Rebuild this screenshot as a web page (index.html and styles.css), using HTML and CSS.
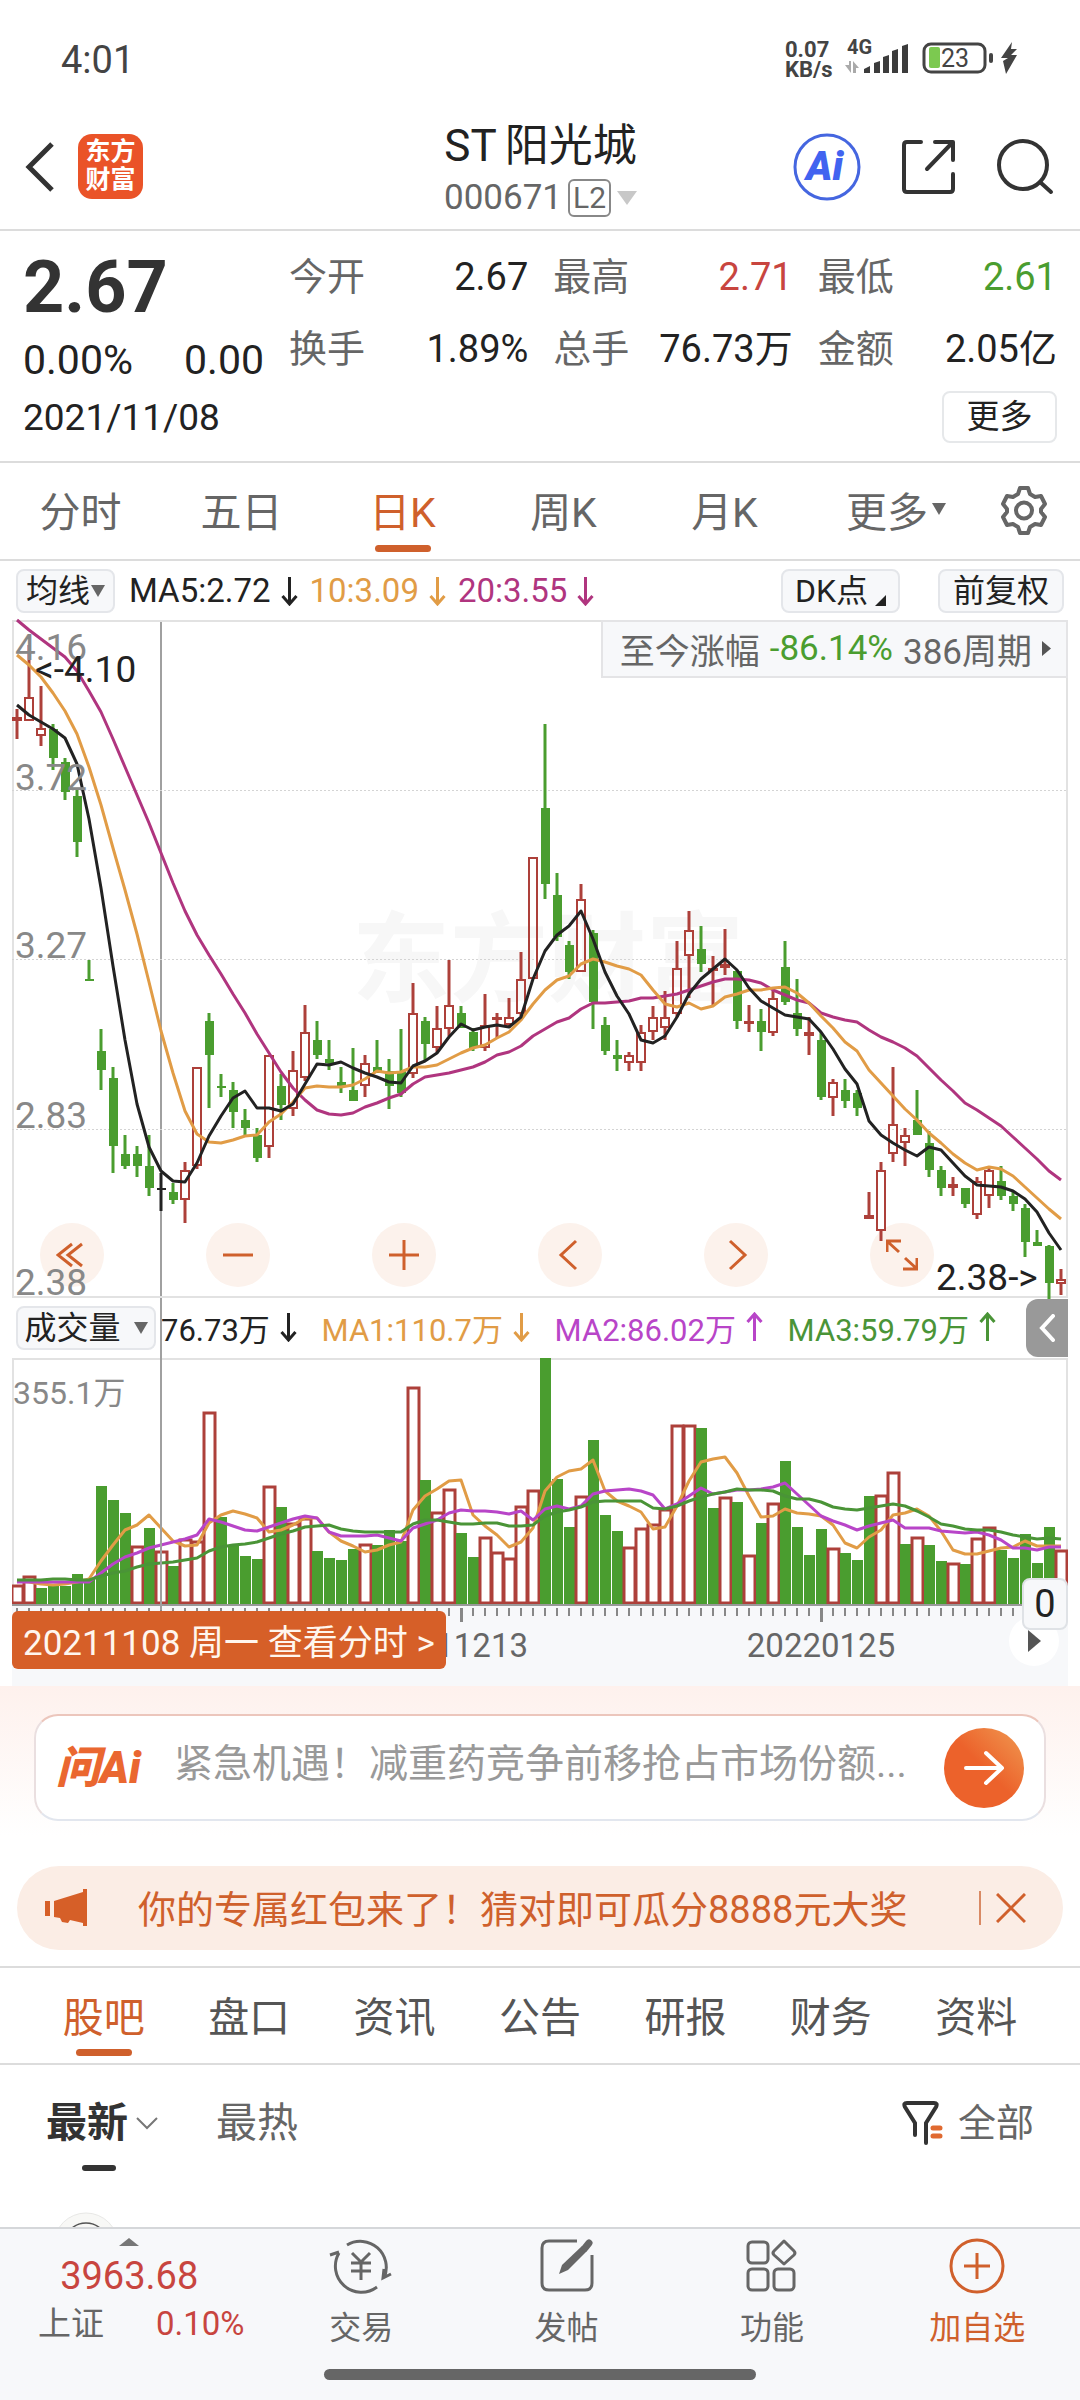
FILE: index.html
```html
<!DOCTYPE html>
<html lang="zh-CN">
<head>
<meta charset="utf-8">
<meta name="viewport" content="width=device-width">
<title>ST阳光城 000671</title>
<link rel="stylesheet" href="styles.css">
</head>
<body>
<div class="page">
  <div class="status">
    <span class="status-time">4:01</span>
    <span class="status-speed">0.07<br>KB/s</span>
    <svg class="status-icons" width="176" height="60" viewBox="0 0 176 60" aria-hidden="true">
      <text x="4" y="25" font-size="20" font-weight="700" fill="#444">4G</text>
      <path d="M2 36h4v-4h2v12zM10 44V32l6 7h-3v5z" fill="#aaa"/>
      <g fill="#3c3c3c"><path d="M21 40l6-3v7h-6zM31 34l6-2v12h-6zM40 28l6-2v18h-6zM49 22l6-2v24h-6zM59 17l6-2v29h-6z"/></g>
      <rect x="81" y="15" width="61" height="28" rx="7" fill="#fff" stroke="#444" stroke-width="3"/>
      <rect x="86" y="18" width="11" height="21" rx="2" fill="#7cc950"/>
      <text x="98" y="38" font-size="25" fill="#444">23</text>
      <rect x="146" y="24" width="4" height="10" rx="2" fill="#444"/>
      <path d="M169 13l-11 16h7l-5 3 3 13 11-19h-6l6-6h-6z" fill="#444"/>
    </svg>
  </div>

  <header class="header">
    <button class="icon-btn back" aria-label="返回"><svg width="32" height="54" viewBox="0 0 32 54"><path d="M28 4L5 27l23 23" fill="none" stroke="#333" stroke-width="5"/></svg></button>
    <div class="logo">东方<br>财富</div>
    <div class="title">
      <h1><span>ST</span>阳光城</h1>
      <div class="code"><span>000671</span><span class="level">L2</span><svg width="20" height="14" viewBox="0 0 20 14"><path d="M0 0h20L10 14z" fill="#c8c8c8"/></svg></div>
    </div>
    <div class="header-actions">
      <button class="icon-btn" aria-label="Ai"><svg width="70" height="70" viewBox="0 0 70 70"><circle cx="35" cy="35" r="32" fill="none" stroke="#4566e0" stroke-width="3"/><text x="14" y="48" font-size="40" font-weight="900" font-style="italic" fill="#4163f0">Ai</text></svg></button>
      <button class="icon-btn" aria-label="分享"><svg width="56" height="56" viewBox="0 0 56 56" fill="none" stroke="#333" stroke-width="4" stroke-linecap="round" stroke-linejoin="round"><path d="M20 3H6q-3 0-3 3v44q0 3 3 3h43q3 0 3-3V35"/><path d="M34 3h18v18M51 4L26 30"/></svg></button>
      <button class="icon-btn" aria-label="搜索"><svg width="58" height="58" viewBox="0 0 58 58" fill="none" stroke="#333" stroke-width="4" stroke-linecap="round"><circle cx="27" cy="27" r="24"/><path d="M44 44l11 10"/></svg></button>
    </div>
  </header>

  <section class="quote">
    <div class="quote-main">
      <div class="price">2.67</div>
      <div class="change"><span>0.00%</span><span>0.00</span></div>
    </div>
    <dl class="quote-grid">
      <div><dt>今开</dt><dd>2.67</dd></div>
      <div><dt>最高</dt><dd class="up">2.71</dd></div>
      <div><dt>最低</dt><dd class="down">2.61</dd></div>
      <div><dt>换手</dt><dd>1.89%</dd></div>
      <div><dt>总手</dt><dd>76.73万</dd></div>
      <div><dt>金额</dt><dd>2.05亿</dd></div>
    </dl>
    <div class="quote-foot"><span>2021/11/08</span><button class="more-btn">更多</button></div>
  </section>

  <nav class="periods">
    <button>分时</button>
    <button>五日</button>
    <button class="active">日K</button>
    <button>周K</button>
    <button>月K</button>
    <button>更多<svg width="14" height="12" viewBox="0 0 14 12"><path d="M0 0h14L7 12z" fill="#666"/></svg></button>
    <button class="gear" aria-label="设置"><svg width="50" height="50" viewBox="0 0 50 50" fill="none" stroke="#666" stroke-width="4" stroke-linejoin="round"><path d="M21 3h8l2 6 5 3 6-1 4 8-4 5v3l4 5-4 8-6-1-5 3-2 6h-8l-2-6-5-3-6 1-4-8 4-5v-3l-4-5 4-8 6 1 5-3z"/><circle cx="25" cy="25.500" r="8"/></svg></button>
  </nav>

  <div class="ma-row">
    <label class="chip select"><select aria-label="均线"><option>均线</option></select><svg width="14" height="12" viewBox="0 0 14 12"><path d="M0 0h14L7 12z" fill="#666"/></svg></label>
    <div class="ma-values">
      <span class="c-dark">MA5:2.72<svg class="arrow" viewBox="0 0 16 30"><path d="M8 1v27M1 20l7 8 7-8"/></svg></span>
      <span class="c-orange">10:3.09<svg class="arrow" viewBox="0 0 16 30"><path d="M8 1v27M1 20l7 8 7-8"/></svg></span>
      <span class="c-magenta">20:3.55<svg class="arrow" viewBox="0 0 16 30"><path d="M8 1v27M1 20l7 8 7-8"/></svg></span>
    </div>
    <button class="chip dk">DK点<svg width="11" height="11" viewBox="0 0 11 11"><path d="M11 0v11H0z" fill="#222"/></svg></button>
    <button class="chip fq">前复权</button>
  </div>

  <section class="chart">
    <div class="plot">
      <svg id="kline" viewBox="0 0 1056 678" role="img" aria-label="日K线"></svg>
      <button class="gain">至今涨幅 <span class="down">-86.14%</span> 386周期<svg width="9" height="15" viewBox="0 0 9 15"><path d="M0 0l9 7.500L0 15z" fill="#555"/></svg></button>
      <div class="tools">
        <button aria-label="快退"><svg viewBox="0 0 32 32"><path d="M16 5L2 16l14 11M26 5L12 16l14 11"/></svg></button>
        <button aria-label="缩小"><svg viewBox="0 0 32 32"><path d="M1 16h30"/></svg></button>
        <button aria-label="放大"><svg viewBox="0 0 32 32"><path d="M1 16h30M16 1v30"/></svg></button>
        <button aria-label="左移"><svg viewBox="0 0 32 32"><path d="M22 2L7 16l15 14"/></svg></button>
        <button aria-label="右移"><svg viewBox="0 0 32 32"><path d="M10 2l15 14-15 14"/></svg></button>
        <button aria-label="全屏"><svg viewBox="0 0 32 32"><path d="M1 13V2h14M2 3l11 10M31 19v11H17M30 29L19 19"/></svg></button>
      </div>
    </div>
    <div class="vol-row">
      <label class="chip select vol"><select aria-label="成交量"><option>成交量</option></select><svg width="14" height="12" viewBox="0 0 14 12"><path d="M0 0h14L7 12z" fill="#666"/></svg></label>
      <div class="vol-values">
        <span class="c-dark">76.73万<svg class="arrow" viewBox="0 0 16 30"><path d="M8 1v27M1 20l7 8 7-8"/></svg></span>
        <span class="c-orange">MA1:110.7万<svg class="arrow" viewBox="0 0 16 30"><path d="M8 1v27M1 20l7 8 7-8"/></svg></span>
        <span class="c-purple">MA2:86.02万<svg class="arrow" viewBox="0 0 16 30"><path d="M8 29V2M1 10l7-8 7 8"/></svg></span>
        <span class="c-green">MA3:59.79万<svg class="arrow" viewBox="0 0 16 30"><path d="M8 29V2M1 10l7-8 7 8"/></svg></span>
      </div>
      <button class="collapse" aria-label="收起"><svg width="16" height="28" viewBox="0 0 16 28"><path d="M14 2L3 14l11 12" fill="none" stroke="#fff" stroke-width="4" stroke-linecap="round"/></svg></button>
    </div>
    <div class="volume">
      <svg id="volume" viewBox="0 0 1056 328" role="img" aria-label="成交量"></svg>
      <button class="date-tip">20211108 周一 查看分时 &gt;</button>
      <button class="play" aria-label="播放"><svg width="13" height="22" viewBox="0 0 13 22"><path d="M0 0l13 11L0 22z" fill="#555"/></svg></button>
      <span class="zero">0</span>
    </div>
    <div class="crosshair"></div>
  </section>

  <section class="promo">
    <a class="ask" href="#ask">
      <span class="ask-logo">问Ai</span>
      <span class="ask-text">紧急机遇！减重药竞争前移抢占市场份额...</span>
      <svg width="80" height="80" viewBox="0 0 80 80"><defs><linearGradient id="go" x1="0" y1="1" x2="1" y2="0"><stop offset="0.500" stop-color="#ec622b"/><stop offset="1" stop-color="#f09a52"/></linearGradient></defs><circle cx="40" cy="40" r="40" fill="url(#go)"/><path d="M22 40h36M42 25l16 15-16 15" fill="none" stroke="#fff" stroke-width="4" stroke-linecap="round" stroke-linejoin="round"/></svg>
    </a>
    <div class="banner">
      <svg width="44" height="38" viewBox="0 0 44 38" fill="#d65f28"><path d="M0 12h5v15H0zM9 12L38 3V0h4v37h-4v-3l-13-3-2 3-6-1-2-4-6-1z"/></svg>
      <a href="#bonus">你的专属红包来了！猜对即可瓜分8888元大奖</a>
      <button class="icon-btn close" aria-label="关闭"><svg width="30" height="30" viewBox="0 0 30 30"><path d="M1 1l28 28M29 1L1 29" stroke="#d0602c" stroke-width="3"/></svg></button>
    </div>
  </section>

  <nav class="sections">
    <button class="active">股吧</button>
    <button>盘口</button>
    <button>资讯</button>
    <button>公告</button>
    <button>研报</button>
    <button>财务</button>
    <button>资料</button>
  </nav>

  <main class="feed">
    <div class="sort">
      <button class="active">最新<svg width="22" height="13" viewBox="0 0 22 13"><path d="M1 1l10 10L21 1" fill="none" stroke="#777" stroke-width="2"/></svg></button>
      <button>最热</button>
      <button class="filter"><svg width="42" height="44" viewBox="0 0 42 44"><path d="M13 34V22L3 6q-2-4 2-4h27q4 0 2 4L24 22v20" fill="none" stroke="#333" stroke-width="4" stroke-linecap="round"/><path d="M31 27h7M31 35h7" stroke="#e06a30" stroke-width="5" stroke-linecap="round"/></svg>全部</button>
    </div>
    <svg class="avatar" width="66" height="66" viewBox="0 0 66 66"><circle cx="33" cy="33" r="32" fill="#f8f8f6" stroke="#e8e8e6"/><circle cx="33" cy="33" r="22" fill="none" stroke="#555" stroke-width="1.500"/></svg>
  </main>

  <footer class="bottom">
    <div class="bottom-row">
      <a class="index" href="#index">
        <svg width="20" height="8" viewBox="0 0 20 8"><path d="M0 8h20L10 0z" fill="#777"/></svg>
        <span class="index-value">3963.68</span>
        <span class="index-line"><span class="index-name">上证</span><span>0.10%</span></span>
      </a>
      <a href="#trade"><svg width="64" height="56" viewBox="0 0 64 56" fill="none" stroke="#666" stroke-width="3"><path d="M18 7A26 26 0 0 1 55 40M48 49A26 26 0 0 1 10 15M1 17l9-3M62 36l-8 4 1-9"/><path d="M23 15l9 9 9-9M22 25h20M22 33h20M32 24v18"/></svg>交易</a>
      <a href="#post"><svg width="56" height="56" viewBox="0 0 56 56" fill="none" stroke="#666" stroke-width="3"><path d="M38 3H10q-7 0-7 7v35q0 7 7 7h36q7 0 7-7V17"/><path d="M20 36l3-9L43 8l5 5-19 19z" fill="#666" stroke="none"/><path d="M46 10l4-5" stroke-width="7" stroke-linecap="round" stroke="#666"/></svg>发帖</a>
      <a href="#tools"><svg width="52" height="56" viewBox="0 0 52 56" fill="none" stroke="#666" stroke-width="3"><rect x="2" y="4" width="20" height="21" rx="4"/><rect x="2" y="31" width="20" height="21" rx="4"/><rect x="28" y="31" width="20" height="21" rx="4"/><path d="M38 3l10 10q2 2 0 4L38 26 28 17q-2-2 0-4z" stroke-linejoin="round"/></svg>功能</a>
      <a class="add" href="#add"><svg width="56" height="56" viewBox="0 0 56 56" fill="none" stroke="#d0602c" stroke-width="3"><circle cx="28" cy="28" r="26"/><path d="M15 28h26M28 15v26"/></svg>加自选</a>
    </div>
    <div class="home-bar"></div>
  </footer>
</div>
<script src="chart.js"></script>
</body>
</html>
```

FILE: styles.css
```css
* { box-sizing: border-box; }

body {
  margin: 0;
  background: #fff;
  color: #222;
  font-family: Roboto, "Noto Sans CJK SC", sans-serif;
}

button, select {
  margin: 0;
  padding: 0;
  border: 0;
  background: none;
  color: inherit;
  font: inherit;
}

a { color: inherit; text-decoration: none; }
svg { display: block; flex: none; }

.page { display: flex; flex-direction: column; min-height: 100vh; }

.up { color: #c8453f; }
.down { color: #4a9d2f; }
.c-dark { color: #222; }
.c-orange { color: #e19c46; }
.c-magenta { color: #b0357f; }
.c-purple { color: #b845c8; }
.c-green { color: #4a9437; }

/* status bar */
.status { display: flex; align-items: center; height: 120px; padding: 0 61px; color: #444; }
.status-time { font-size: 38px; }
.status-speed { margin-left: auto; width: 58px; font-size: 22px; font-weight: 700; line-height: 20px; }
.status-icons { margin-bottom: 2px; }

/* title bar */
.header { display: flex; align-items: center; position: relative; height: 111px; padding: 0 26px 16px 24px; border-bottom: 2px solid #dcdcdc; }
.icon-btn { display: flex; align-items: center; justify-content: center; }
.logo { width: 65px; height: 65px; margin-left: 22px; padding-top: 4px; border-radius: 14px; background: #ea5328; color: #fff; font-size: 25px; font-weight: 700; line-height: 28px; text-align: center; }
.title { flex: 1; display: flex; flex-direction: column; align-items: center; padding: 6px 0 0 146px; }
.title h1 { margin: 0; font-size: 44px; font-weight: 400; line-height: 56px; }
.title h1 span { margin-right: 8px; }
.code { display: flex; align-items: center; gap: 6px; color: #666; font-size: 35px; line-height: 48px; }
.level { padding: 0 3px; border: 2px solid #888; border-radius: 6px; font-size: 30px; line-height: 34px; }
.header-actions { display: flex; align-items: center; gap: 39px; }

/* quote */
.quote { display: grid; grid-template-columns: 241px 1fr; column-gap: 25px; padding: 11px 23px 13px; border-bottom: 2px solid #dcdcdc; font-size: 38px; }
.price { padding-top: 4px; font-size: 72px; font-weight: 700; line-height: 84px; color: #333; }
.change { display: flex; justify-content: space-between; font-size: 41px; line-height: 60px; height: 56px; }
.quote-grid { display: grid; grid-template-columns: repeat(3, 1fr); column-gap: 25px; margin: 0; line-height: 70px; }
.quote-grid div { display: flex; justify-content: space-between; }
.quote-grid dt { color: #666; }
.quote-grid dd { margin: 0; }
.quote-foot { grid-column: 1 / -1; display: flex; align-items: center; justify-content: space-between; height: 62px; font-size: 37px; }
.more-btn { width: 115px; height: 52px; border: 2px solid #e6e8ea; border-radius: 8px; font-size: 33px; line-height: 44px; }

/* period tabs */
.periods { display: grid; grid-template-columns: repeat(5, 161fr) 182fr 93fr; height: 98px; border-bottom: 2px solid #dcdcdc; color: #666; font-size: 41px; }
.periods button { display: flex; align-items: center; justify-content: center; gap: 4px; position: relative; padding-bottom: 4px; }
.periods .gear { padding: 0 20px 2px 0; }
.active { color: #cf602c; }
.periods .active::after, .sections .active::after { content: ""; position: absolute; left: 50%; bottom: 7px; width: 56px; height: 7px; margin-left: -28px; border-radius: 4px; background: #cf602c; }

/* indicator rows */
.chip { display: flex; align-items: center; justify-content: center; height: 44px; border: 2px solid #e4e6ea; border-radius: 8px; background: #f7f8fa; font-size: 32px; line-height: 36px; }
.select select { appearance: none; }
.ma-row { display: flex; align-items: center; height: 59px; padding: 0 16px; font-size: 33px; }
.ma-row .select { width: 99px; }
.ma-values { display: flex; gap: 12px; margin: 0 auto 0 14px; }
.ma-values span, .vol-values span { display: flex; align-items: center; gap: 10px; }
.arrow { width: 17px; height: 30px; fill: none; stroke: currentColor; stroke-width: 3; }
.dk { gap: 7px; width: 119px; margin-right: 38px; }
.dk svg { margin-top: 20px; }
.fq { width: 126px; }

/* chart */
.chart { position: relative; margin: 0 12px; }
.plot, .volume { position: relative; }
.plot > svg, .volume > svg { width: 100%; height: auto; }
.plot > svg { position: relative; z-index: 1; overflow: visible; pointer-events: none; }
.gain { position: absolute; z-index: 2; top: 0; right: 0; display: flex; align-items: center; gap: 10px; height: 58px; padding: 0 15px 2px 17px; border: 2px solid #e4e4e6; background: #f7f8fa; color: #666; font-size: 35px; }
.tools { position: absolute; left: 28px; right: 134px; bottom: 11px; display: flex; justify-content: space-between; }
.tools button { display: flex; align-items: center; justify-content: center; width: 64px; height: 64px; border-radius: 50%; background: #fcf2ec; }
.tools svg { width: 32px; height: 32px; fill: none; stroke: #cf602c; stroke-width: 3; }
.vol-row { display: flex; align-items: center; height: 60px; padding-left: 4px; font-size: 31px; }
.vol { width: 140px; gap: 12px; }
.vol-values { flex: 1; display: flex; justify-content: space-between; padding: 0 30px 2px 5px; }
.collapse { display: flex; align-items: center; justify-content: center; width: 42px; height: 58px; border-radius: 12px 0 0 12px; background: #999; }
.crosshair { position: absolute; top: 0; bottom: 76px; left: 14%; width: 2px; background: #a0a0a0; }
.date-tip { position: absolute; z-index: 1; left: 0; bottom: 17px; height: 58px; padding: 0 11px 2px; border-radius: 6px; background: #d65f28; color: #fff6ee; font-size: 35px; white-space: nowrap; }
.play { position: absolute; right: 9px; bottom: 20px; display: flex; align-items: center; justify-content: center; width: 50px; height: 50px; border-radius: 50%; background: #fff; }
.zero { position: absolute; right: 0; bottom: 56px; width: 46px; height: 52px; border: 2px solid #dfe2e6; border-radius: 8px; background: #f7f8fa; font-size: 38px; line-height: 48px; text-align: center; }

/* promotion */
.promo { display: flex; flex-direction: column; gap: 45px; padding: 28px 17px 16px; background: linear-gradient(#fef1ed, #fff 150px); }
.ask { display: flex; align-items: center; height: 107px; margin: 0 17px; padding: 0 20px; border: 2px solid #eadfe0; border-top-color: #ecc6bc; border-bottom-color: #e2e6ee; border-radius: 24px; background: #fff; }
.ask-logo { width: 118px; color: #ea6730; font-size: 44px; font-weight: 900; font-style: italic; line-height: 48px; white-space: nowrap; }
.ask-text { flex: 1; padding-bottom: 16px; color: #999; font-size: 39px; white-space: nowrap; overflow: hidden; }
.banner { display: flex; align-items: center; height: 84px; padding: 0 37px 0 28px; border-radius: 42px; background: #fbede5; color: #cf602c; font-size: 38px; }
.banner a { flex: 1; padding: 0 0 3px 49px; }
.close { height: 34px; padding-left: 15px; border-left: 2px solid #d98a64; }

/* section tabs */
.sections { display: grid; grid-template-columns: repeat(7, 1fr); height: 99px; padding: 0 31px; border-top: 2px solid #dcdcdc; border-bottom: 2px solid #dcdcdc; color: #555; font-size: 41px; }
.sections button { position: relative; padding-bottom: 4px; }
.sections .active { color: #cf602c; }

/* feed */
.feed { flex: 1 1 0px; min-height: 0; overflow: hidden; padding: 20px 46px 0; }
.sort { display: flex; height: 88px; color: #666; font-size: 41px; line-height: 76px; }
.sort button { display: flex; align-items: center; gap: 8px; position: relative; height: 76px; }
.sort button + button { margin-left: 58px; }
.sort .active { color: #333; font-weight: 700; }
.sort .active::after { content: ""; position: absolute; left: 36px; bottom: -10px; width: 34px; height: 6px; border-radius: 3px; background: #333; }
.sort .filter { gap: 14px; margin-left: auto; font-size: 38px; }
.avatar { margin: 39px 0 0 7px; }

/* bottom bar */
.bottom { height: 173px; border-top: 2px solid #d5d7da; background: #f7f8fa; color: #666; }
.bottom-row { display: grid; grid-template-columns: 258fr repeat(4, 205fr); height: 140px; font-size: 32px; line-height: 40px; }
.bottom-row a { display: flex; flex-direction: column; align-items: center; gap: 14px; padding-top: 9px; }
.bottom-row .index { gap: 0; color: #c8453f; }
.index-value { margin-top: 8px; font-size: 38px; line-height: 44px; }
.index-line { display: flex; gap: 52px; align-self: flex-start; margin: 4px 0 0 38px; font-size: 33px; line-height: 44px; }
.index-name { color: #666; }
.bottom-row .add { color: #cf602c; }
.home-bar { width: 40%; height: 11px; margin: 0 auto; border-radius: 6px; background: #666; }
```

FILE: chart.js
```javascript
const GREEN = '#4a9d2f', RED = '#ad403a', DARK = '#222';
const x = i => 5 + 12 * i;

// kind (g: down, r: up, k: flat), high, body top, body bottom, low
const candles = `r 89 97 101 119,r 25 77 101 101,r 66 108 116 126,g 104 109 138 150,g 138 142 172 180,g 170 176 222 237,
g 340 359 360 360,g 409 431 450 470,g 447 458 526 553,g 515 534 546 549,g 526 534 546 557,g 515 546 568 576,
k 553 568 569 591,g 563 572 580 584,r 542 550 580 603,r 447 447 546 549,g 393 401 435 488,g 454 466 468 477,
g 462 470 492 508,g 489 500 508 516,g 508 515 538 542,r 435 435 527 538,g 454 466 485 500,r 431 450 489 496,
r 385 412 458 461,g 401 420 435 439,g 420 439 443 450,g 447 462 466 473,g 428 470 481 481,r 435 443 466 477,
g 420 447 453 453,g 439 451 466 489,g 409 451 473 477,r 363 393 454 458,g 397 401 424 440,r 386 408 428 432,
r 340 385 409 416,g 386 393 408 408,g 408 412 428 431,r 374 405 428 431,r 393 397 398 418,r 378 397 405 408,
r 332 359 394 396,r 237 237 359 359,g 104 188 264 279,g 253 275 317 321,g 321 325 352 359,r 264 279 352 352,
g 310 313 382 409,g 397 405 431 435,g 420 435 439 451,r 432 435 443 451,r 405 412 443 451,r 386 397 412 420,
r 371 397 408 420,r 321 348 394 397,r 291 310 336 378,g 306 329 344 352,r 336 348 351 386,r 309 344 348 355,
g 350 351 401 409,r 385 401 404 412,g 389 401 412 431,r 371 378 413 416,g 321 347 382 385,g 359 393 409 416,
r 397 412 416 435,g 412 420 477 480,r 459 462 478 496,g 459 470 481 488,g 470 473 488 496,r 572 595 599 599,
r 542 550 611 621,r 447 504 534 542,r 508 515 523 546,g 470 500 515 515,g 511 523 550 557,g 546 550 568 576,
r 557 564 568 576,g 568 568 584 588,r 557 561 595 599,r 546 550 576 588,g 546 561 576 580,g 572 576 584 591,
g 584 588 622 637,g 610 622 626 626,g 625 626 663 679,r 649 659 664 675`.split(',').map(s => s.trim().split(' '));

const priceLines = [
  ['#b0357f', [0,10,19,28,37,51,71,92,119,147,175,203,233,263,291,315,335,354,374,393,414,433,452,468,480,490,494,495,493,487,483,478,474,464,457,455,453,450,447,442,435,432,426,416,409,402,398,389,383,383,382,381,378,378,376,374,370,366,362,359,359,360,363,370,375,380,383,393,397,400,402,410,417,422,428,436,448,460,471,483,490,498,506,517,528,539,551,560]],
  ['#e19c46', [35,45,57,73,91,114,147,185,228,270,314,362,411,453,491,514,522,523,520,516,515,502,494,482,468,466,467,467,465,459,451,453,452,447,447,445,439,433,428,425,418,412,400,384,370,360,356,344,339,342,346,349,355,370,384,387,383,389,386,377,374,370,370,368,367,373,383,396,408,422,431,450,463,476,489,500,513,523,534,543,550,547,549,556,567,578,589,599]],
  [DARK, [85,95,102,109,118,144,199,268,346,420,484,527,551,561,562,543,516,496,478,471,488,488,491,484,464,444,445,442,448,453,457,462,463,446,441,433,417,404,410,407,405,407,397,359,331,315,306,291,319,352,376,394,420,423,416,397,374,359,349,339,350,368,381,388,395,397,399,412,429,449,464,501,515,523,530,536,527,530,543,556,565,566,567,571,579,592,613,630]]
];

// kind and bar height
const volumes = 'r19 r28 g16 g18 g18 g30 g25 g118 g104 g91 r58 g76 r53 g38 r65 r63 r192 g87 g58 g48 g45 r118 g97 r81 r86 g53 g46 g44 g55 r60 g59 g74 g63 r217 g124 r92 r115 g71 g47 r67 r52 r46 r98 r114 g246 g125 g77 r108 g164 g89 g73 r57 r76 r80 r95 r179 r179 g176 g96 r107 g102 r49 g81 r101 g143 g77 g49 g75 r56 g51 g44 g108 r109 r132 g60 r67 g59 g43 r41 g40 r66 r77 g54 g46 g70 g41 g77 r54'.split(' ');

const volumeLines = [
  ['#e19c46', [223,224,226,227,226,224,221,203,187,172,167,157,170,183,188,187,165,157,153,156,160,174,172,167,160,160,174,183,188,194,192,187,184,152,138,131,123,122,157,168,177,189,184,170,133,119,113,111,102,133,143,148,154,171,169,148,123,104,101,99,115,138,159,158,151,155,156,158,167,185,190,179,172,157,155,151,158,173,192,196,196,193,190,189,183,188,188,188]],
  ['#b845c8', [224,224,224,224,224,224,224,215,206,199,195,190,187,184,181,177,161,164,168,172,173,169,165,161,158,160,174,178,178,178,177,180,183,170,166,162,155,152,153,153,154,156,153,162,151,148,151,148,136,133,132,131,133,137,151,146,138,130,136,134,132,132,131,129,125,136,147,158,163,167,172,168,165,162,170,170,170,173,174,175,174,177,182,190,190,192,189,189]],
  ['#4a9437', [222,222,222,221,221,222,222,218,215,213,209,206,205,204,202,200,193,189,187,186,184,180,176,173,169,168,167,171,173,174,174,174,174,166,162,162,164,166,166,165,165,168,168,167,158,154,152,149,144,143,143,143,143,150,151,148,143,139,136,134,131,132,132,133,138,141,141,144,149,151,152,150,148,146,148,153,159,166,168,171,172,172,174,177,179,181,180,181]]
];

const rect = (rx, y, w, h, attrs) => `<rect x="${rx}" y="${y}" width="${w}" height="${h}" ${attrs}/>`;
const line = ([color, ys]) =>
  `<polyline points="${ys.map((y, i) => x(i) + ',' + y).join(' ')}" fill="none" stroke="${color}" stroke-width="3" stroke-linejoin="round"/>`;
const wick = (cx, from, to, color) => `<path d="M${cx} ${from}V${to}" stroke="${color}" stroke-width="3"/>`;
const text = (tx, y, size, color, str, attrs = '') =>
  `<text x="${tx}" y="${y}" font-size="${size}" fill="${color}" ${attrs}>${str}</text>`;

function drawKline() {
  let out = text(340, 374, 98, '#f7f7f7', '东方财富', 'font-weight="700"');
  out += rect(1, 1, 1054, 676, 'fill="none" stroke="#e2e2e2" stroke-width="2"');
  for (const y of [170, 339, 509]) {
    out += `<path d="M0 ${y}.5H1056" stroke="#d4d4d4" stroke-dasharray="2 2"/>`;
  }
  candles.forEach(([kind, ...v], i) => {
    const [high, top, bottom, low] = v.map(Number);
    const color = kind === 'g' ? GREEN : kind === 'r' ? RED : DARK;
    const h = Math.max(bottom - top, 2);
    if (kind === 'r') {
      if (high < top) out += wick(x(i), high, top, color);
      if (low > bottom) out += wick(x(i), bottom, low, color);
      out += rect(x(i) - 4, top + 1, 8, Math.max(h - 2, 1), `fill="none" stroke="${color}" stroke-width="2"`);
    } else {
      out += wick(x(i), high, low, color);
      out += rect(x(i) - 4, top, 9, h, `fill="${color}"`);
    }
  });
  priceLines.forEach(l => { out += line(l); });
  [['4.16', 40], ['3.72', 170], ['3.27', 338], ['2.83', 508], ['2.38', 675]].forEach(([s, y]) => {
    out += text(3, y, 37, '#888', s);
  });
  out += text(23, 62, 37, DARK, '&lt;-4.10') + text(924, 670, 37, DARK, '2.38-&gt;');
  document.getElementById('kline').innerHTML = out;
}

function drawVolume() {
  let out = rect(0, 247, 1056, 81, 'fill="#f7f8fa"');
  out += '<path d="M1 248V1H1055V248" fill="none" stroke="#e2e2e2" stroke-width="2"/>';
  volumes.forEach((s, i) => {
    const h = Number(s.slice(1));
    out += s[0] === 'g'
      ? rect(x(i) - 5, 246 - h, 11, h, `fill="${GREEN}"`)
      : rect(x(i) - 5, 247 - h, 11, h - 2, `fill="#fff" stroke="${RED}" stroke-width="3"`);
  });
  volumeLines.forEach(l => { out += line(l); });
  out += rect(0, 246, 1056, 2, 'fill="#999"');
  for (let i = 0; i < 86; i++) {
    const major = i === 37 || i === 67;
    out += rect(x(i) - 1, 250, major ? 3 : 2, major ? 14 : 8, 'fill="#888"');
  }
  out += text(1, 46, 32, '#888', '355.1万');
  out += text(516, 299, 33, '#666', '20211213', 'text-anchor="end"');
  out += text(809, 299, 33, '#666', '20220125', 'text-anchor="middle"');
  document.getElementById('volume').innerHTML = out;
}

drawKline();
drawVolume();
```
